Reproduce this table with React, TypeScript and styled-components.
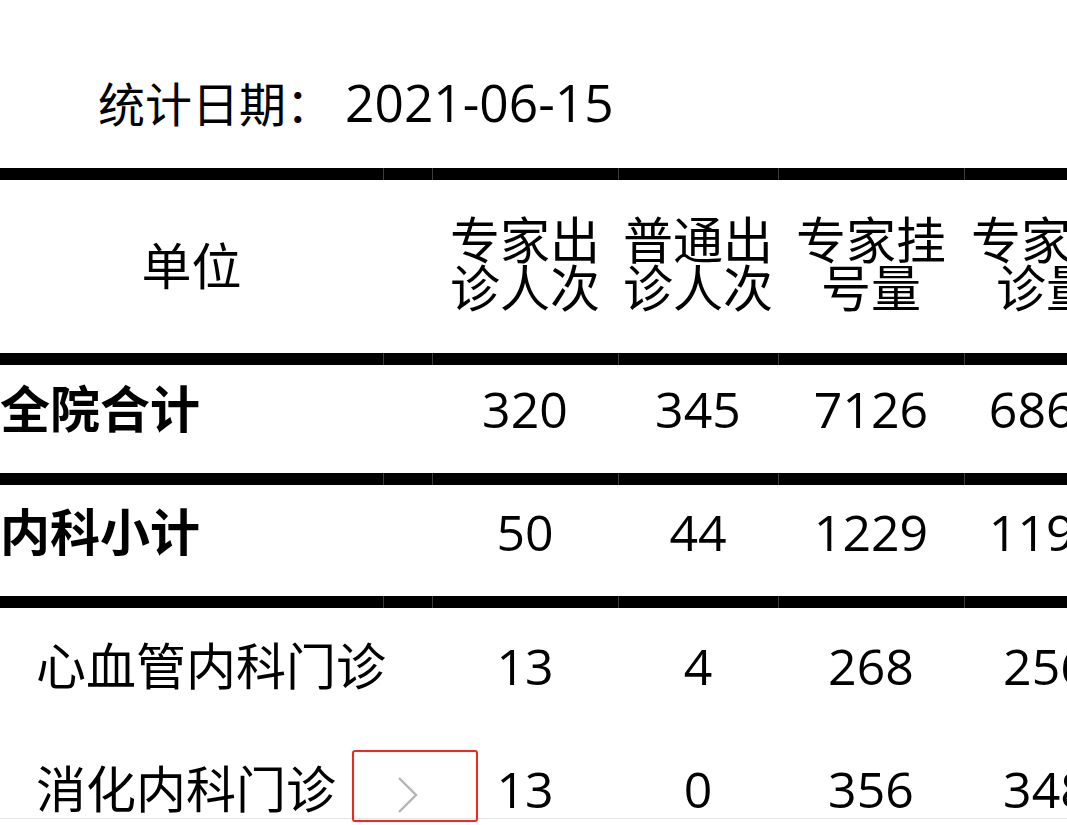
import React from "react";
import styled, { createGlobalStyle } from "styled-components";

const GlobalStyle = createGlobalStyle`
  html, body { margin: 0; padding: 0; background: #fff; }
  body {
    font-family: "Open Sans", "Noto Sans CJK SC", sans-serif;
    color: #000;
  }
`;

const COLS = "383px 49px 186px 160px 186px 164px";

const Page = styled.div`
  position: relative;
  width: 1067px;
  height: 825px;
  overflow: hidden;
  background: #fff;
`;

const Title = styled.div`
  box-sizing: border-box;
  height: 168px;
  padding: 72px 0 0 98px;
  display: flex;
  align-items: baseline;
  line-height: 60px;
  white-space: nowrap;
`;

const TitleLabel = styled.span`
  font-size: 47px;
`;

const TitleDate = styled.span`
  font-size: 51.5px;
  padding-left: 12px;
`;

const TableWrap = styled.div`
  box-sizing: border-box;
  height: 651px;
  border-bottom: 1px solid #e4e4e4;
  overflow: hidden;
`;

const Band = styled.div`
  display: grid;
  grid-template-columns: ${COLS};
  height: 12px;
`;

const BandCell = styled.div`
  background: #000;
  & + & {
    box-shadow: inset 1px 0 0 #3c3c3c;
  }
`;

const Row = styled.div<{ $h: number }>`
  display: grid;
  grid-template-columns: ${COLS};
  height: ${(p) => p.$h}px;
`;

const Cell = styled.div<{ $left?: boolean; $bold?: boolean; $indent?: number; $lift?: number }>`
  display: flex;
  align-items: center;
  justify-content: ${(p) => (p.$left ? "flex-start" : "center")};
  padding-left: ${(p) => p.$indent ?? 0}px;
  padding-bottom: ${(p) => p.$lift ?? 0}px;
  box-sizing: border-box;
  font-size: 50px;
  line-height: 60px;
  font-weight: ${(p) => (p.$bold ? 700 : 400)};
  white-space: nowrap;
`;

const HeadText = styled.div`
  font-size: 50px;
  line-height: 48px;
  text-align: center;
  white-space: nowrap;
  padding-bottom: 6px;
`;

const ExpandButton = styled.div`
  position: absolute;
  left: 352px;
  top: 750px;
  width: 126px;
  height: 72px;
  box-sizing: border-box;
  border: 2px solid #f5261c;
  border-radius: 3px;
  display: flex;
  align-items: flex-start;
  justify-content: flex-start;
  padding: 24px 0 0 43px;
`;

const Handle = styled.div`
  position: absolute;
  left: 955px;
  top: 819px;
  width: 9px;
  height: 6px;
`;

type DataRow = {
  name: string;
  values: string[];
  kind: "total" | "sub" | "item";
};

const rows: DataRow[] = [
  { name: "全院合计", values: ["320", "345", "7126", "6865"], kind: "total" },
  { name: "内科小计", values: ["50", "44", "1229", "1195"], kind: "sub" },
  { name: "心血管内科门诊", values: ["13", "4", "268", "256"], kind: "item" },
  { name: "消化内科门诊", values: ["13", "0", "356", "348"], kind: "item" },
];

const headers = [
  ["专家出", "诊人次"],
  ["普通出", "诊人次"],
  ["专家挂", "号量"],
  ["专家就", "诊量"],
];

const BandRow = () => (
  <Band>
    {Array.from({ length: 6 }).map((_, i) => (
      <BandCell key={i} />
    ))}
  </Band>
);

const heights: Record<DataRow["kind"], number> = { total: 108, sub: 111, item: 123 };
const lifts: Record<DataRow["kind"], number> = { total: 20, sub: 18, item: 7 };

export default function App() {
  return (
    <>
      <GlobalStyle />
      <Page>
        <Title>
          <TitleLabel>统计日期：</TitleLabel>
          <TitleDate>2021-06-15</TitleDate>
        </Title>
        <TableWrap>
          <BandRow />
          <Row $h={173}>
            <Cell $lift={2}>单位</Cell>
            <Cell />
            {headers.map((h, i) => (
              <Cell key={i}>
                <HeadText>
                  {h[0]}
                  <br />
                  {h[1]}
                </HeadText>
              </Cell>
            ))}
          </Row>
          <BandRow />
          {rows.map((r) => (
            <React.Fragment key={r.name}>
              <Row $h={heights[r.kind]}>
                <Cell
                  $left
                  $bold={r.kind !== "item"}
                  $indent={r.kind === "item" ? 36 : 0}
                  $lift={lifts[r.kind]}
                >
                  {r.name}
                </Cell>
                <Cell />
                {r.values.map((v, i) => (
                  <Cell key={i} $lift={lifts[r.kind]}>
                    {v}
                  </Cell>
                ))}
              </Row>
              {r.kind !== "item" && <BandRow />}
            </React.Fragment>
          ))}
        </TableWrap>
        <ExpandButton>
          <svg width="22" height="38" viewBox="0 0 22 38">
            <polyline points="2,2 19,19 2,36" fill="none" stroke="#b4b4b4" strokeWidth="2.4" />
          </svg>
        </ExpandButton>
        <Handle>
          <svg width="9" height="6" viewBox="0 0 9 6">
            <path d="M1 1 H8 L6.5 5 H2.5 Z" fill="none" stroke="#c8c8c8" strokeWidth="1" />
          </svg>
        </Handle>
      </Page>
    </>
  );
}
